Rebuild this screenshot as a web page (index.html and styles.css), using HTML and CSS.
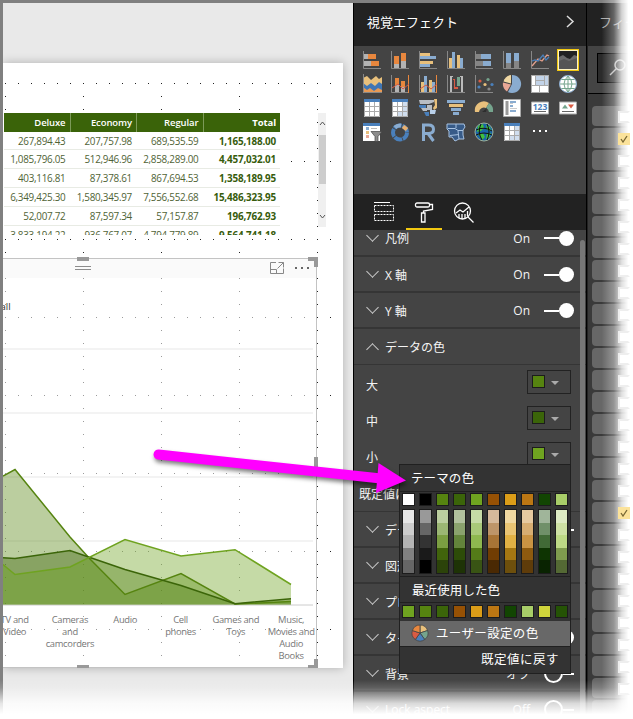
FILE: index.html
```html
<!DOCTYPE html>
<html lang="ja">
<head>
<meta charset="utf-8">
<title>視覚エフェクト</title>
<link rel="stylesheet" href="styles.css">
</head>
<body>
<div class="app">
  <main class="canvas">
    <div class="page">
      <svg class="dots" width="340" height="605">
        <g stroke="#222" stroke-width="1" stroke-dasharray="1 12">
          <path d="M2 20.5H328M2 98.5H328M2 176.5H328M2 254.5H328M2 332.5H328M2 410.5H328M2 488.5H328M2 566.5H328"/>
          <path d="M2.5 20V604M80.5 20V604M158.5 20V604M236.5 20V604M314.5 20V604"/>
        </g>
      </svg>
      <div class="matrix">
        <table>
          <thead><tr><th>Deluxe</th><th>Economy</th><th>Regular</th><th class="total">Total</th></tr></thead>
          <tbody>
            <tr><td>267,894.43</td><td>207,757.98</td><td>689,535.59</td><td class="total">1,165,188.00</td></tr>
            <tr><td>1,085,796.05</td><td>512,946.96</td><td>2,858,289.00</td><td class="total">4,457,032.01</td></tr>
            <tr><td>403,116.81</td><td>87,378.61</td><td>867,694.53</td><td class="total">1,358,189.95</td></tr>
            <tr><td>6,349,425.30</td><td>1,580,345.97</td><td>7,556,552.68</td><td class="total">15,486,323.95</td></tr>
            <tr><td>52,007.72</td><td>87,597.34</td><td>57,157.87</td><td class="total">196,762.93</td></tr>
            <tr><td>3,833,194.22</td><td>936,767.07</td><td>4,794,779.89</td><td class="total">9,564,741.18</td></tr>
          </tbody>
        </table>
      </div>
      <div class="vscroll">
        <svg width="8" height="114"><rect x="1" y="22" width="7" height="49" fill="#cdcdcd"/><path d="M2 12l2.500-3 2.500 3M2 102l2.500 3 2.500-3" fill="none" stroke="#555"/></svg>
      </div>
      <section class="visual">
        <header class="visual-bar">
          <svg width="314" height="20">
            <path d="M72 7.500h16M72 10.500h16" stroke="#8c8c8c"/>
            <g fill="none" stroke="#888"><path d="M273 3.500h-5.500v11h13v-5M267.500 10.500h6v4M274.500 9.500l6-6M275.500 3.500h5v5"/></g>
            <g fill="#666"><rect x="292" y="8" width="2" height="2"/><rect x="298" y="8" width="2" height="2"/><rect x="304" y="8" width="2" height="2"/></g>
          </svg>
        </header>
        <div class="legend">all</div>
        <svg class="chart" viewBox="3 318 314 290" width="314" height="290">
          <path d="M3 349h310M3 413h310M3 477h310M3 541h310" stroke="#f3f3f3" stroke-width="2"/>
          <path d="M3 605h310" stroke="#ccc"/>
          <path d="M3 476L15 469.500L70 537L90 559L125 594.500L181 573.500L235 604L291 601.500V604.500H3Z" fill="#568410" fill-opacity=".4"/>
          <path d="M3 557.700L15 558.500L70 550.500L90 557.500L125 569.500L181 585.500L235 603.700L291 598.700V604.500H3Z" fill="#3b6509" fill-opacity=".4"/>
          <path d="M3 564.500L15 574.500L70 567L125 539.500L181 556L235 549.700L291 584.500V604.500H3Z" fill="#6fa320" fill-opacity=".4"/>
          <g fill="none" stroke-width="1.500">
            <path d="M3 476L15 469.500L70 537L90 559L125 594.500L181 573.500L235 604L291 601.500" stroke="#568410"/>
            <path d="M3 557.700L15 558.500L70 550.500L90 557.500L125 569.500L181 585.500L235 603.700L291 598.700" stroke="#3b6509"/>
            <path d="M3 564.500L15 574.500L70 567L125 539.500L181 556L235 549.700L291 584.500" stroke="#6fa320"/>
          </g>
        </svg>
        <div class="axis">
          <span>TV and<br>Video</span><span>Cameras<br>and<br>camcorders</span><span>Audio</span><span>Cell<br>phones</span><span>Games and<br>Toys</span><span>Music,<br>Movies and<br>Audio<br>Books</span>
        </div>
        <svg class="handles" width="316" height="412" fill="#999">
          <rect x="74" y="0" width="12" height="4"/><path d="M305 0h10v10h-4v-6h-6z"/>
          <rect x="311" y="200" width="4" height="12"/><rect x="74" y="408" width="12" height="3"/><path d="M311 402h4v9h-10v-3h6z"/>
        </svg>
      </section>
    </div>
  </main>

  <aside class="viz">
    <header class="pane-head"><span>視覚エフェクト</span><svg width="9" height="13" fill="none" stroke="#ddd" stroke-width="1.500"><path d="M1 1l6 5.500-6 5.500"/></svg></header>
    <div class="gallery">
      <svg viewBox="0 0 20 20"><path d="M1.500 1v17.500H19" class="ax"/><path fill="#e8873e" d="M6 4h8v5H6zM9 11h8v5H9z"/><path fill="#b3b3b3" d="M2 4h4v5H2zM2 11h7v5H2z"/></svg>
      <svg viewBox="0 0 20 20"><path d="M1.500 1v17.500H19" class="ax"/><path fill="#e8873e" d="M4 6h5v8H4zM11 3h5v8h-5z"/><path fill="#b3b3b3" d="M4 14h5v4H4zM11 11h5v7h-5z"/></svg>
      <svg viewBox="0 0 20 20"><path d="M1.500 1v17.500H19" class="ax"/><path fill="#e8c07c" d="M2 3h10v3H2zM2 11h13v3H2z"/><path fill="#8aacd0" d="M2 6h16v3H2zM2 14h10v3H2z"/></svg>
      <svg viewBox="0 0 20 20"><path d="M1.500 1v17.500H19" class="ax"/><path fill="#e8c07c" d="M3 8h3v10H3zM11 5h3v13h-3z"/><path fill="#8aacd0" d="M6 2h3v16H6zM14 8h3v10h-3z"/></svg>
      <svg viewBox="0 0 20 20"><path d="M1.500 1v17.500H19" class="ax"/><path fill="#8aacd0" d="M7 4h10v5H7zM9 11h8v5H9z"/><path fill="#858585" d="M2 4h5v5H2zM2 11h7v5H2z"/></svg>
      <svg viewBox="0 0 20 20"><path d="M1.500 1v17.500H19" class="ax"/><path fill="#8aacd0" d="M4 3h5v10H4zM12 3h5v8h-5z"/><path fill="#858585" d="M4 13h5v5H4zM12 11h5v7h-5z"/></svg>
      <svg viewBox="0 0 20 20" fill="none"><path d="M1.500 1v17.500H19" class="ax"/><path stroke="#e4a08c" stroke-width="1.300" d="M2 16l6-7 4 2 5-6 2 1"/><path stroke="#4a80bc" stroke-width="1.300" d="M2 11l3-1 3 1 5-6 3 5 3-3"/></svg>
      <svg class="selected" viewBox="0 0 18 18"><path fill="#222" d="M0 0h18v18H0z"/><path fill="#6a6a6a" d="M0 6l4-2 4 3 3 1 4-4 3 1v13H0z"/><path fill="#555" d="M0 10l5-2 5 2 8-3v11H0z"/></svg>

      <svg viewBox="0 0 20 20"><path fill="#3f76b5" d="M1 8h19v11H1z"/><path fill="#e8c07c" d="M1 4l4-2 4 4 5-4 3 3 3-2v7l-3-2-4 4-4-3-4 3-4-3z"/><path fill="#e89a54" d="M1 13l4 3 3-2 4 3 4-3 4 2v3H1z"/><path d="M1.500 0v18.500H20" class="ax"/></svg>
      <svg viewBox="0 0 20 20"><path fill="#b3b3b3" d="M5 10h4v8H5zM11 13h4v5h-4z"/><path fill="#e8873e" d="M5 4h4v7H5zM11 7h4v6h-4z"/><path d="M1.500 1v17.500H18" class="ax"/><path d="M18.500 1v18" stroke="#e8873e"/><path fill="none" stroke="#d95b43" d="M2 14l6-4 5 5 6-5"/></svg>
      <svg viewBox="0 0 20 20"><path fill="#e8c07c" d="M3 8h3v10H3zM11 6h3v12h-3z"/><path fill="#8aacd0" d="M6 2h3v16H6zM14 8h3v10h-3z"/><path d="M1.500 1v17.500H18" class="ax"/><path d="M18.500 1v18" stroke="#e8873e"/><path fill="none" stroke="#d95b43" d="M2 15l6-4 5 4 6-5"/></svg>
      <svg viewBox="0 0 20 20"><path d="M1.500 1v17.500H19" class="ax"/><path fill="#bbb" d="M4 2h3v1H6v15H4zM14 2h3v16h-2V3h-1z"/><path fill="#d95b43" d="M7 5h2v8h3v2H8V6H7z"/><path fill="#75a48d" d="M11 3h3v9h-3z"/></svg>
      <svg viewBox="0 0 20 20"><path d="M1.500 1v17.500H19" class="ax"/><circle cx="6" cy="7" r="1.600" fill="#d95b43"/><circle cx="14" cy="5.500" r="1.600" fill="#75a48d"/><circle cx="5" cy="13" r="1.600" fill="#4a80bc"/><circle cx="11" cy="10.500" r="1.600" fill="#e8c07c"/><circle cx="18" cy="10.500" r="1.600" fill="#4a80bc"/><circle cx="15" cy="15" r="1.600" fill="#888"/></svg>
      <svg viewBox="0 0 20 20"><path fill="#8aacd0" d="M10 1a9 9 0 1 1-4 17l4-8z"/><path fill="#e8a795" d="M1 8.500l8 2-4 7a9 9 0 0 1-4-9z"/><path fill="#f0d8a4" d="M9 1v8.500L1.500 7.500A9 9 0 0 1 9 1z"/></svg>
      <svg viewBox="0 0 20 20"><path fill="#aaa" d="M1 1h18v18H1z"/><path fill="#fff" d="M2 2h3v9H2zM2 12h7v6H2zM10 12h8v6h-8z"/><path fill="#c2d3e8" d="M6 2h8v4H6zM6 7h8v4H6zM15 2h3v9h-3z"/></svg>
      <svg viewBox="0 0 20 20"><circle cx="10" cy="10" r="8.500" fill="#fff" stroke="#8aacd0"/><path fill="none" stroke="#75a48d" d="M10 2v16M2 10h16M3.500 5.500h13M3.500 14.500h13M10 2q-8 8 0 16q8-8 0-16"/></svg>

      <svg viewBox="0 0 20 20"><path fill="#fff" d="M2 1h16v18H2z"/><path fill="#4a80bc" d="M2 1h16v3H2z"/><path fill="none" stroke="#aaa" d="M2.500 4v14.500h15V4M2 8.500h15M2 13.500h15M7.500 4v14M12.500 4v14"/></svg>
      <svg viewBox="0 0 20 20"><path fill="#fff" d="M2 1h16v18H2z"/><path fill="#d0deef" d="M12 4h6v15H7v-5h5z"/><path fill="#4a80bc" d="M2 1h16v3H2z"/><path fill="none" stroke="#aaa" d="M2.500 4v14.500h15V4M2 8.500h15M2 13.500h15M7.500 4v14M12.500 4v14"/></svg>
      <svg viewBox="0 0 20 20"><path fill="#b9bec4" d="M1 2h15v2l-5 2H2zM3 10h6v3H5zM9 7h5v5H9z"/><path fill="#4a80bc" d="M1 7h7v3H3L1 9zM6 14h5v4H8z"/><path fill="#b9d0ea" d="M12 12h6l-1 4h-5z"/><path fill="#e8c07c" d="M16 1h3v9l-3 2-1-2 2-3z"/></svg>
      <svg viewBox="0 0 20 20"><path fill="#8aacd0" d="M1 2h18v3H1zM5 10h10v3H5zM7 14h6v3H7z"/><path fill="#e8c07c" d="M3 6h14v3H3z"/></svg>
      <svg viewBox="0 0 20 20"><path fill="#e8c07c" d="M1 14a9 9 0 0 1 14-9l-3 5a5 5 0 0 0-7 4z"/><path fill="#75a48d" d="M15 5a9 9 0 0 1 4 9h-4a5 5 0 0 0-3-4z"/><path fill="#2d2d2d" d="M8 14l5-4-1 4z"/></svg>
      <svg viewBox="0 0 20 20"><path fill="#fff" stroke="#aaa" d="M1.500 1.500h17v17h-17z"/><path stroke="#999" stroke-width="3" d="M5 3v14"/><path fill="#8aacd0" d="M8 3h6v2H8zM8 7h3v2H8zM8 12h6v2H8z"/><path d="M8 5.500h3M8 10.500h7" stroke="#ccc"/></svg>
      <svg viewBox="0 0 20 20"><path fill="#fff" stroke="#aaa" d="M1.500 4v12h17V4z"/><text x="10" y="11.500" class="num">123</text><path d="M4 13.500h12" stroke="#666"/></svg>
      <svg viewBox="0 0 20 20"><path fill="#fff" stroke="#aaa" d="M1.500 4v12h17V4z"/><path fill="#75a48d" d="M4 10.500l3-4 3 4z"/><path fill="#d95b43" d="M10 6.500h6l-3 4z"/><path d="M4 13.500h12" stroke="#666"/></svg>

      <svg viewBox="0 0 20 20"><path fill="#fff" d="M1 1h17v18H1z"/><path fill="#4a80bc" d="M1 1h17v3H1z"/><path fill="#8aacd0" d="M4 5h3v3H4z"/><path fill="#e8c07c" d="M4 9h3v3H4z"/><path fill="#e8a795" d="M4 13h3v3H4z"/><path d="M9 6.500h6" stroke="#bbb"/><path fill="#8c8c8c" stroke="#444" stroke-width=".7" d="M9 9.500h11l-4 5v5h-3v-5z"/></svg>
      <svg viewBox="0 0 20 20" fill="none" stroke-width="4"><circle cx="10" cy="10.500" r="7" stroke="#4a80bc" stroke-dasharray="8 .8"/><path d="M5 5.500a7 7 0 0 1 6-2" stroke="#8aacd0"/><path d="M13 4.500l4 3" stroke="#e8b070"/></svg>
      <svg viewBox="0 0 20 20" fill="none" stroke="#8aacd0" stroke-width="3"><path d="M5.500 19V3h5q5 0 5 4.200t-5 4.200h-5M10 11.500l5.500 7.500"/></svg>
      <svg viewBox="0 0 20 20"><path fill="#375b88" stroke="#a8c3e2" d="M1 2h17l1 3-2 3v5l1 4h-5l-4 2-3-4H3V9L1 7z"/><path fill="none" stroke="#a8c3e2" d="M2 6.500h7l3 2h5M10 2v4M4 13.500l9-1M12 9l1 8"/></svg>
      <svg viewBox="0 0 20 20"><circle cx="10" cy="10" r="9" fill="#1b66a8" stroke="#9bb19a"/><path fill="#3fbf3f" d="M4 4l5-2 1 4-3 3-4 1zM12 3l4 2 1 4-4-1zM4 12l5-1 2 4-3 3zM13 11l4 0-2 5-3 1z"/><path d="M7 2q-4 8 1 16M13 2q4 8 0 16M2 8q8-4 16 1M2 13q8-4 16 0" fill="none" stroke="#111"/></svg>
      <svg viewBox="0 0 20 20"><path fill="#fff" d="M2 1h16v18H2z"/><path fill="#d0deef" d="M12 4h6v15H7v-5h5z"/><path fill="#4a80bc" d="M2 1h16v3H2z"/><path fill="none" stroke="#aaa" d="M2.500 4v14.500h15V4M2 8.500h15M2 13.500h15M7.500 4v14M12.500 4v14"/></svg>
      <svg viewBox="0 0 20 20"><path fill="#fff" d="M3 8h2v2H3zM9 8h2v2H9zM15 8h2v2h-2z"/></svg>
    </div>
    <nav class="tabs">
      <span class="tab"><svg width="22" height="20" fill="none" stroke="#fff"><path d="M1 .5h16"/><path d="M1.500 3.500h19v6h-19zM1.500 12.500h19v6h-19z" stroke-dasharray="2 1"/></svg></span>
      <span class="tab active"><svg width="20" height="21" fill="none" stroke="#fff" stroke-width="1.300"><rect x="1.500" y="1" width="14" height="4" rx="1.500"/><path d="M15.500 2.500h3v5l-9 1.500v2"/><path d="M7.500 11h3.500v9H7.500z"/></svg></span>
      <span class="tab"><svg width="22" height="21" fill="none" stroke="#fff" stroke-width="1.300"><circle cx="9.500" cy="9" r="8"/><path d="M14.500 14.500l6 6M3 11l4-3 3 2 6-5M6 16v-4M9 17v-5M12 16v-4M14.500 14v-5"/></svg></span>
    </nav>
    <div class="format">
      <div class="row first"><i class="chev"></i><b>凡例</b><em>On</em><i class="switch"></i></div>
      <div class="row"><i class="chev"></i><b>X 軸</b><em>On</em><i class="switch"></i></div>
      <div class="row"><i class="chev"></i><b>Y 軸</b><em>On</em><i class="switch"></i></div>
      <div class="row thin"><i class="chev up"></i><b>データの色</b></div>
      <div class="colors">
        <div class="color"><span>大</span><i class="pick"><u class="c1"></u></i></div>
        <div class="color"><span>中</span><i class="pick"><u class="c2"></u></i></div>
        <div class="color"><span>小</span><i class="pick"><u class="c3"></u></i></div>
        <div class="reset">既定値に戻す</div>
      </div>
      <div class="row"><i class="chev"></i><b>データ ラベル</b><em>オフ</em><i class="switch off"></i></div>
      <div class="row"><i class="chev"></i><b>図形</b></div>
      <div class="row"><i class="chev"></i><b>プロット</b></div>
      <div class="row"><i class="chev"></i><b>タイトル</b><em>On</em><i class="switch"></i></div>
      <div class="row"><i class="chev"></i><b>背景</b><em>オフ</em><i class="switch off"></i></div>
      <div class="row"><i class="chev"></i><b>Lock aspect</b><em>Off</em><i class="switch off"></i></div>
      <div class="thumb"></div>
    </div>
  </aside>

  <aside class="fields">
    <header class="pane-head"><span>フィールド</span></header>
    <div class="searchwrap"><div class="search"><svg width="18" height="18" fill="none" stroke="#bbb" stroke-width="1.500"><circle cx="11" cy="6" r="5"/><path d="M7.500 9.500L1 16"/></svg></div></div>
    <div class="list" id="fields"></div>
  </aside>
</div>

<div class="popup">
  <h3>テーマの色</h3>
  <div class="swatches theme" id="theme"></div>
  <div class="swatches shades" id="shades"></div>
  <h3 class="recent-title">最近使用した色</h3>
  <div class="swatches recent" id="recent"></div>
  <div class="custom"><svg width="18" height="18" viewBox="-9 -9 18 18" stroke="#444" stroke-width=".8"><path fill="#e8c07c" d="M0 0V-8A8 8 0 0 1 7.600-2.500z"/><path fill="#75a48d" d="M0 0L7.600-2.500A8 8 0 0 1 4.700 6.500z"/><path fill="#4a80bc" d="M0 0L4.700 6.500A8 8 0 0 1-4.700 6.500z"/><path fill="#d95b43" d="M0 0L-4.700 6.500A8 8 0 0 1-7.600-2.500z"/><path fill="#e8873e" d="M0 0L-7.600-2.500A8 8 0 0 1 0-8z"/></svg><span>ユーザー設定の色</span></div>
  <div class="revert">既定値に戻す</div>
</div>

<svg class="arrow" width="270" height="60" viewBox="145 442 270 60"><path d="M158.500 454.500L381 478.500" stroke="#f0f" stroke-width="10" stroke-linecap="round"/><path d="M378.500 463L406 480.500L376 493Z" fill="#f0f"/></svg>
<div class="fade-right"></div>
<div class="marks" id="marks"></div>
<div class="fade-bottom"></div>
<script src="script.js"></script>
</body>
</html>
```
FILE: styles.css
```css
* { box-sizing: border-box; }
body { margin: 0; width: 633px; height: 719px; overflow: hidden; position: relative; background: #fff; font-family: "Open Sans", "Noto Sans CJK JP", sans-serif; }
svg { display: block; flex: none; }
i, em, u { font-style: normal; text-decoration: none; }
b { font-weight: 400; }
.app { display: grid; grid-template-columns: 350px 234px 1fr; height: 719px; border-top: 3px solid #808080; border-left: 3px solid #808080; }

.canvas { background: #e9e9e9; padding-top: 60px; overflow: hidden; }
.page { position: relative; width: 340px; height: 605px; background: #fff; box-shadow: 0 0 9px rgba(0,0,0,.25); clip-path: inset(-10px -10px -10px 0); }
.dots { position: absolute; left: 0; top: 0; }
.matrix { position: absolute; left: 1px; top: 50px; width: 276px; height: 122px; overflow: hidden; background: #fff; }
table { width: 276px; table-layout: fixed; border-collapse: separate; border-spacing: 0; font-size: 9.900px; letter-spacing: -.27px; color: #4f6335; }
th, td { padding: 1px 5px 0 0; text-align: right; height: 19px; line-height: 17px; white-space: nowrap; }
th { background: #3a6309; color: #fff; font-weight: 600; border-right: 1px solid #7c9a58; padding: 0 4px 0 0; letter-spacing: -.1px; font-size: 9.500px; }
th:first-child, th:nth-child(2), th:nth-child(3) { width: 66.500px; }
th.total { border-right: 0; font-weight: 700; }
td { border-bottom: 1px solid #e8ebe4; }
tbody tr:first-child td { height: 18px; line-height: 16px; }
td.total { font-weight: 700; color: #375c0c; padding-right: 4px; letter-spacing: -.18px; }
.vscroll { position: absolute; left: 315px; top: 50px; width: 8px; height: 114px; background: #f0f0f0; }
.visual { position: absolute; left: 0; top: 195px; width: 314px; height: 410px; background: rgba(255,255,255,.55); border: solid #c3c3c3; border-width: 1px 1px 1px 0; }
.visual-bar { height: 19px; background: #fafafa; }
.legend { height: 40px; padding-top: 22px; margin-left: -2.500px; font-size: 9.500px; line-height: 14px; color: #333; }
.chart { width: 314px; height: 290px; }
.axis { position: absolute; left: -16px; top: 355px; display: grid; grid-template-columns: repeat(6, 55.300px); font-size: 9.400px; line-height: 12px; letter-spacing: -.3px; color: #777; text-align: center; white-space: nowrap; }
.axis span { margin: 0 -5px; }
.handles { position: absolute; left: 0; top: -2px; }

.viz { background: #444; border-left: 1px solid #000; border-right: 1px solid #000; overflow: hidden; display: flex; flex-direction: column; }
.pane-head { height: 43px; flex: none; background: #222; color: #fff; display: flex; align-items: center; justify-content: space-between; padding: 0 11px 6px 13px; font-size: 13px; white-space: nowrap; overflow: hidden; }
.gallery { height: 148px; flex: none; padding: 2px 0 0 4px; display: grid; grid-template-columns: repeat(8, 28px); grid-auto-rows: 24px; place-items: center; align-content: start; justify-content: start; }
.gallery svg { width: 20px; height: 20px; }
.gallery .selected { width: 22px; height: 22px; border: 1px solid #f2c811; background: #fff4c0; padding: 1px; }
.ax { fill: none; stroke: #888; }
.num { font: 700 8.500px "Open Sans", sans-serif; fill: #4a80bc; text-anchor: middle; }
.tabs { height: 36px; flex: none; background: #222; display: flex; padding-left: 10px; }
.tab { width: 42px; display: grid; place-items: center; padding-right: 4px; }
.tab:first-child { padding-right: 2px; }
.tab.active { width: 36px; border-bottom: 2px solid #f2c811; padding: 2px 0 0; }
.tab:last-child { margin-left: 1px; padding-right: 0; }

.format { position: relative; flex: 1; overflow: hidden; color: #f4f4f4; font-size: 12px; }
.row { height: 36px; display: flex; align-items: center; padding: 0 12px 0 13px; border-bottom: 2px solid #353535; }
.row.first { margin-top: -9px; }
.row:not(.first) { padding-top: 1px; }
.row.thin { border-bottom-width: 1px; padding-top: 0; }
.row b { flex: 1; white-space: nowrap; padding-left: 7px; }
.row em { margin-right: 14px; }
.chev { width: 11px; height: 11px; display: grid; place-items: center; }
.chev::before { content: ""; width: 8px; height: 8px; border: solid #ccc; border-width: 0 1px 1px 0; transform: translateY(-3px) rotate(45deg); }
.chev.up::before { transform: translateY(3px) rotate(225deg); }
.switch { width: 30px; height: 15px; display: flex; align-items: center; }
.switch::before { content: ""; flex: 1; height: 2px; background: #fff; }
.switch::after { content: ""; width: 15px; height: 15px; border-radius: 50%; background: #fff; }
.switch.off { flex-direction: row-reverse; }
.switch.off::after { background: none; border: 2px solid #fff; }
.colors { height: 147px; padding-top: 3px; border-bottom: 1px solid #353535; }
.color { height: 36px; display: flex; align-items: flex-start; justify-content: space-between; padding: 2px 15px 0 12px; }
.color span { line-height: 32px; }
.pick { width: 44px; height: 24px; border: 1px solid #222; display: flex; align-items: center; padding: 0 0 1px 4px; gap: 6px; }
.pick::after { content: ""; border: solid transparent; border-width: 4px 4px 0; border-top-color: #aaa; margin-top: 2px; }
.pick u { width: 13px; height: 13px; border: 1px solid #1c1c1c; }
.c1 { background: #568410; } .c2 { background: #3b6509; } .c3 { background: #6fa320; }
.reset { padding: 8px 0 0 5px; line-height: 22px; }
.thumb { position: absolute; right: 1px; top: 10px; width: 5px; height: 500px; border-radius: 3px 3px 0 0; background: #777; }

.fields { background: #444; overflow: hidden; border-left: 1px solid #222; }
.fields .pane-head { color: #aaa; padding-left: 11px; }
.searchwrap { height: 48px; border-bottom: 1px solid #000; padding: 7px 0 0 9px; }
.search { height: 30px; border: 1px solid #000; background: #2b2b2b; padding: 5px 0 0 11px; }
.list { padding: 12px 0 0 4px; display: grid; gap: 2px; grid-auto-rows: 20px; background: #3a3a3a; height: 630px; align-content: start; }
.list span { background: #676767; border-radius: 4px 0 0 4px; }

.popup { position: absolute; left: 399px; top: 464px; width: 172px; height: 210px; background: #333; border: 1px solid #202020; color: #fff; font-size: 12.500px; display: flex; flex-direction: column; }
.popup h3 { margin: 0; height: 27px; padding-left: 11px; font-weight: 400; font-size: 12.500px; line-height: 27px; border-bottom: 1px solid #202020; letter-spacing: .1px; }
.popup h3.recent-title { border-top: 1px solid #202020; padding-left: 12px; }
.swatches { display: grid; grid-template-columns: repeat(10, 13px); column-gap: 4px; padding-left: 2px; }
.swatches > span { border: 1px solid #1c1c1c; }
.theme { padding-top: 1px; height: 17px; }
.theme > span, .recent > span { height: 13px; }
.shades { height: 67px; }
.shades > span { height: 65px; display: grid; grid-template-rows: repeat(5, 1fr); }
.recent { height: 18px; padding-top: 2px; }
.custom { height: 26px; background: #686868; border-bottom: 1px solid #202020; display: flex; align-items: center; gap: 7px; padding: 0 0 2px 11px; white-space: nowrap; letter-spacing: .35px; }
.revert { flex: 1; line-height: 26px; text-align: right; padding-right: 11px; letter-spacing: .5px; }

.arrow { position: absolute; left: 145px; top: 442px; filter: drop-shadow(1px 3px 2px rgba(0,0,0,.5)); }
.fade-right { position: absolute; left: 600px; top: 0; width: 33px; height: 719px; background: linear-gradient(90deg, rgba(255,255,255,0) 5%, rgba(255,255,255,.3) 42%, rgba(255,255,255,.8) 66%, #fff 86%); }
.marks { position: absolute; left: 618px; top: 111px; display: grid; grid-auto-rows: 12px; row-gap: 10px; width: 12px; }
.marks span { border: 2px solid #eee; border-right-color: #fff; background: #fff; display: grid; place-items: center; }
.marks .on { background: #fbe29a; border-color: #fbe29a; }
.fade-bottom { position: absolute; left: 0; top: 680px; width: 633px; height: 39px; background: linear-gradient(rgba(255,255,255,0), rgba(255,255,255,.15) 20%, rgba(255,255,255,.8) 60%, #fff 88%); }
```
FILE: script.js
```js
const theme = ['#ffffff', '#000000', '#568410', '#3b6509', '#6fa320', '#965104', '#db9d18', '#bc7713', '#124502', '#a8cd68'];
const shades = [
  ['#e6e6e6', '#ccc', '#b3b3b3', '#808080', '#666'],
  ['#999', '#666', '#333', '#1a1a1a', '#000'],
  ['#bbcea0', '#9bb674', '#7b9e42', '#41640c', '#2c430a'],
  ['#b1c19d', '#8aa26d', '#63843b', '#2d4c08', '#1e3306'],
  ['#c6dba6', '#a9c979', '#8eb84f', '#547b18', '#395414'],
  ['#d5b99b', '#bd9569', '#a87436', '#713d03', '#4a2903'],
  ['#f0d8a1', '#e9c473', '#e1b144', '#a57712', '#6d4f0c'],
  ['#e6c9a0', '#d7ad72', '#ca9343', '#8e5a0f', '#5f3c0a'],
  ['#a0b59a', '#709069', '#416a36', '#0e3402', '#092301'],
  ['#deebc4', '#cee1a4', '#bdd985', '#7f9b4e', '#546934']
];
const recent = ['#6fa320', '#568410', '#3b6509', '#965104', '#db9d18', '#bc7713', '#124502', '#a8cd68', '#cfd43b', '#255305'];
const cell = c => `<span style="background:${c}"></span>`;
document.getElementById('theme').innerHTML = theme.map(cell).join('');
document.getElementById('recent').innerHTML = recent.map(cell).join('');
document.getElementById('shades').innerHTML = shades.map(s => `<span>${s.map(c => `<i style="background:${c}"></i>`).join('')}</span>`).join('');
const tick = '<svg width="8" height="8" fill="none" stroke="#776633" stroke-width="1.3"><path d="M1 4l2 3 4-6"/></svg>';
document.getElementById('fields').innerHTML = '<span></span>'.repeat(28);
document.getElementById('marks').innerHTML = Array.from({ length: 27 }, (_, k) => k === 1 || k === 18 ? `<span class="on">${tick}</span>` : '<span></span>').join('');
```
